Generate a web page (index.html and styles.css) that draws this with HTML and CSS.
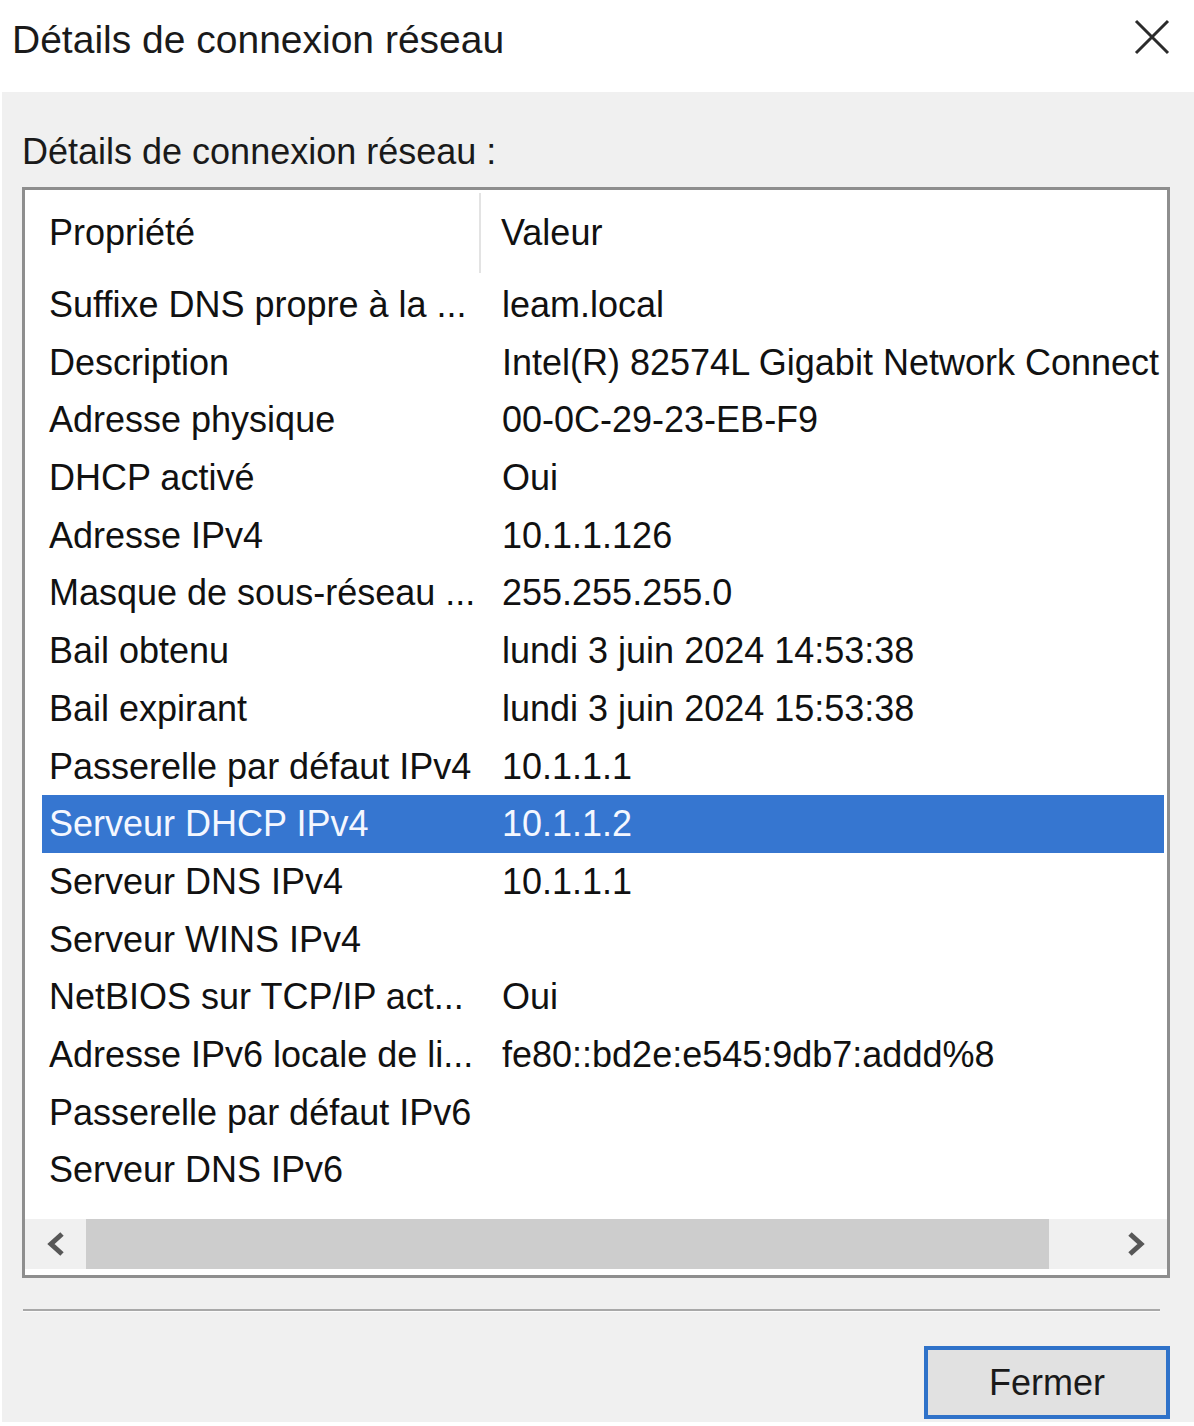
FILE: index.html
```html
<!DOCTYPE html>
<html lang="fr">
<head>
<meta charset="utf-8">
<title>Détails de connexion réseau</title>
<link rel="stylesheet" href="styles.css">
</head>
<body>
<div class="window">
  <div class="titlebar">
    <span class="title">Détails de connexion réseau</span>
    <svg class="close" width="36" height="36" viewBox="0 0 36 36"><path d="M2 2 L34 34 M34 2 L2 34" stroke="#2b2b2b" stroke-width="3" fill="none"/></svg>
  </div>
  <div class="content">
    <div class="label">Détails de connexion réseau :</div>
    <div class="listbox">
      <div class="header">
        <div class="hcol1">Propriété</div>
        <div class="hcol2">Valeur</div>
      </div>
      <div class="rows">
        <div class="row"><span class="c1">Suffixe DNS propre à la ...</span><span class="c2">leam.local</span></div>
        <div class="row"><span class="c1">Description</span><span class="c2">Intel(R) 82574L Gigabit Network Connect</span></div>
        <div class="row"><span class="c1">Adresse physique</span><span class="c2">00-0C-29-23-EB-F9</span></div>
        <div class="row"><span class="c1">DHCP activé</span><span class="c2">Oui</span></div>
        <div class="row"><span class="c1">Adresse IPv4</span><span class="c2">10.1.1.126</span></div>
        <div class="row"><span class="c1">Masque de sous-réseau ...</span><span class="c2">255.255.255.0</span></div>
        <div class="row"><span class="c1">Bail obtenu</span><span class="c2">lundi 3 juin 2024 14:53:38</span></div>
        <div class="row"><span class="c1">Bail expirant</span><span class="c2">lundi 3 juin 2024 15:53:38</span></div>
        <div class="row"><span class="c1">Passerelle par défaut IPv4</span><span class="c2">10.1.1.1</span></div>
        <div class="row selected"><span class="c1">Serveur DHCP IPv4</span><span class="c2">10.1.1.2</span></div>
        <div class="row"><span class="c1">Serveur DNS IPv4</span><span class="c2">10.1.1.1</span></div>
        <div class="row"><span class="c1">Serveur WINS IPv4</span><span class="c2"></span></div>
        <div class="row"><span class="c1">NetBIOS sur TCP/IP act...</span><span class="c2">Oui</span></div>
        <div class="row"><span class="c1">Adresse IPv6 locale de li...</span><span class="c2">fe80::bd2e:e545:9db7:addd%8</span></div>
        <div class="row"><span class="c1">Passerelle par défaut IPv6</span><span class="c2"></span></div>
        <div class="row"><span class="c1">Serveur DNS IPv6</span><span class="c2"></span></div>
      </div>
      <div class="hscroll">
        <div class="arrow left"><svg width="24" height="28" viewBox="0 0 24 28"><path d="M18 4 L7 14 L18 24" stroke="#575757" stroke-width="5" fill="none"/></svg></div>
        <div class="track"><div class="thumb"></div></div>
        <div class="arrow right"><svg width="24" height="28" viewBox="0 0 24 28"><path d="M6 4 L17 14 L6 24" stroke="#575757" stroke-width="5" fill="none"/></svg></div>
      </div>
    </div>
    <div class="separator"></div>
    <div class="footer">
      <button class="btn">Fermer</button>
    </div>
  </div>
</div>
</body>
</html>
```
FILE: styles.css
```css
html, body {
  margin: 0;
  padding: 0;
  background: #ffffff;
}
body {
  font-family: "Liberation Sans", Arial, sans-serif;
  color: #111;
}
.window {
  width: 1194px;
  height: 1426px;
  display: flex;
  flex-direction: column;
  background: #ffffff;
}
.titlebar {
  height: 92px;
  display: flex;
  justify-content: space-between;
  align-items: flex-start;
  padding: 18px 24px 0 12px;
  box-sizing: border-box;
  background: #ffffff;
}
.title {
  font-size: 39px;
  line-height: 44px;
  color: #1a1a1a;
}
.close {
  margin-top: 1px;
}
.content {
  flex: 1;
  background: #f0f0f0;
  margin: 0 0 4px 2px;
  padding: 40px 24px 0 20px;
  display: flex;
  flex-direction: column;
}
.label {
  font-size: 36px;
  line-height: 40px;
  margin-bottom: 15px;
  color: #1a1a1a;
}
.listbox {
  height: 1091px;
  box-sizing: border-box;
  border: 3px solid #8e8e8e;
  background: #ffffff;
  display: flex;
  flex-direction: column;
}
.header {
  height: 86px;
  display: flex;
  font-size: 36px;
}
.hcol1 {
  width: 430px;
  padding-left: 24px;
  margin-top: 3px;
  height: 80px;
  line-height: 80px;
  border-right: 2px solid #e3e3e3;
}
.hcol2 {
  padding-left: 20px;
  line-height: 86px;
}
.rows {
  flex: 1;
  padding: 0 3px 0 17px;
}
.row {
  height: 57.7px;
  line-height: 57.7px;
  display: flex;
  font-size: 36px;
  white-space: nowrap;
  overflow: hidden;
  color: #111;
}
.row .c1 {
  width: 433px;
  padding-left: 7px;
  flex: none;
}
.row .c2 {
  padding-left: 20px;
  flex: none;
}
.row.selected {
  background: #3676d0;
  color: #f4f7ff;
}
.hscroll {
  height: 50px;
  margin-bottom: 6px;
  display: flex;
  background: #f0f0f0;
}
.arrow {
  width: 61px;
  display: flex;
  align-items: center;
  justify-content: center;
  flex: none;
}
.arrow.right {
  width: 63px;
}
.track {
  flex: 1;
  display: flex;
}
.thumb {
  width: 963px;
  background: #cdcdcd;
}
.separator {
  margin: 31px 10px 0 1px;
  border-top: 2px solid #a8a8a8;
  border-bottom: 1px solid #fafafa;
}
.footer {
  display: flex;
  justify-content: flex-end;
  margin-top: 34px;
}
.btn {
  width: 246px;
  height: 73px;
  box-sizing: border-box;
  border: 4px solid #2f72c9;
  background: #e1e1e1;
  font-family: "Liberation Sans", Arial, sans-serif;
  font-size: 36px;
  color: #1a1a1a;
  padding: 0;
}
```
